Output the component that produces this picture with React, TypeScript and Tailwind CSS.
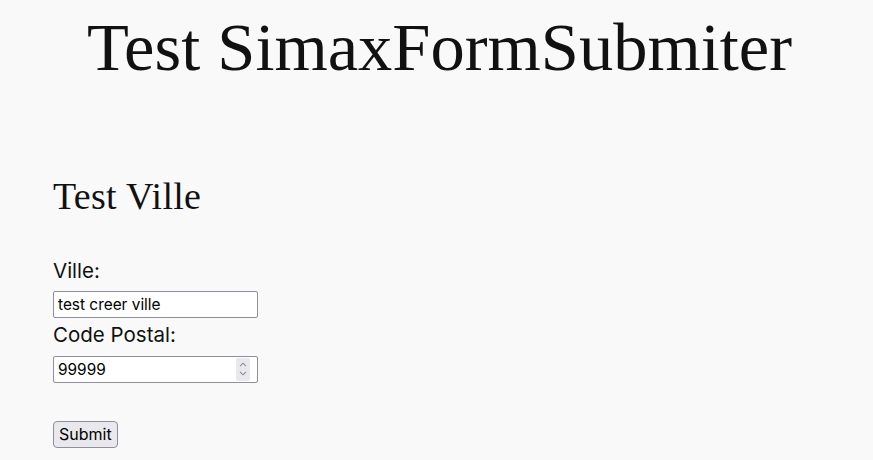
import React from "react";

const serif = { fontFamily: '"Liberation Serif", serif' };

function Spinner() {
  return (
    <div className="absolute right-[8px] top-[2px] bottom-[2px] w-[14px] bg-[#e9e9ed] rounded-[2px] flex flex-col items-center justify-center gap-[4px]">
      <svg width="8" height="5" viewBox="0 0 8 5" fill="none">
        <path d="M1 4.2L4 1.2L7 4.2" stroke="#8a8a93" strokeWidth="1.1" />
      </svg>
      <svg width="8" height="5" viewBox="0 0 8 5" fill="none">
        <path d="M1 0.8L4 3.8L7 0.8" stroke="#8a8a93" strokeWidth="1.1" />
      </svg>
    </div>
  );
}

export default function App() {
  return (
    <div className="min-h-[460px] bg-[#f9f9f9] text-[#111]">
      <h1 className="text-center text-[68.5px] leading-none pt-[13px] pl-[6px]" style={serif}>
        Test SimaxFormSubmiter
      </h1>
      <div className="px-[53px] pt-[95px]" style={{ fontFamily: "Inter, sans-serif" }}>
        <h2 className="text-[38px] leading-none tracking-[0.3px]" style={serif}>
          Test Ville
        </h2>
        <form className="mt-[42px] flex flex-col items-start">
          <label className="text-[20.5px] leading-[28px]">Ville:</label>
          <input
            type="text"
            defaultValue="test creer ville"
            className="mt-[6px] w-[205px] h-[27px] border border-[#8f8f9d] rounded-[2px] bg-white px-[4px] text-[15.4px] text-black outline-none"
          />
          <label className="mt-[3px] text-[20.5px] leading-[28px]">Code Postal:</label>
          <div className="relative mt-[7px] w-[205px] h-[27px]">
            <input
              type="text"
              defaultValue="99999"
              className="w-full h-full border border-[#8f8f9d] rounded-[2px] bg-white px-[4px] text-[15.4px] text-black outline-none"
            />
            <Spinner />
          </div>
          <button
            type="button"
            className="mt-[38px] h-[27px] px-[5px] border border-[#8f8f9d] rounded-[4px] bg-[#e9e9ed] text-[16px] text-black"
          >
            Submit
          </button>
        </form>
      </div>
    </div>
  );
}
